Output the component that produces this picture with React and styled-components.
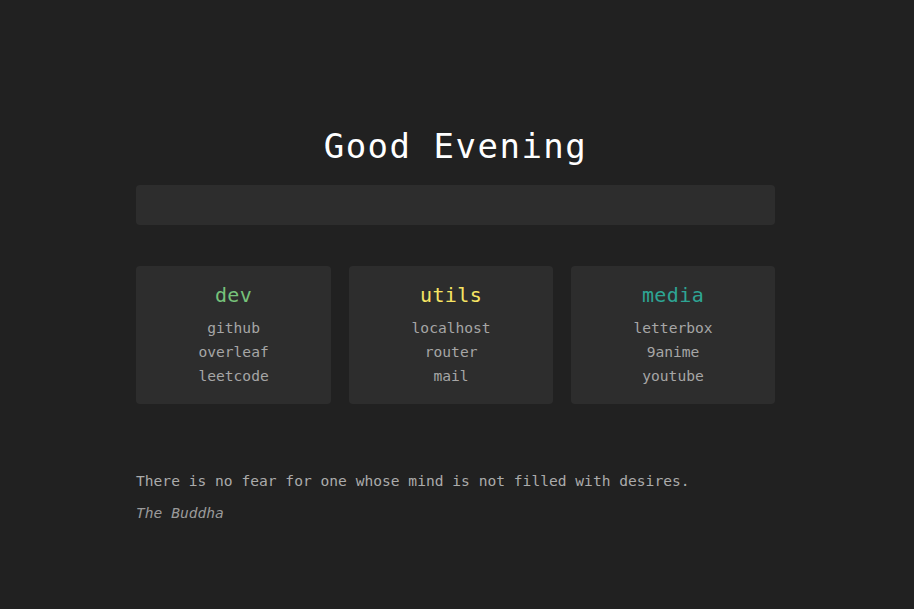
import styled, { createGlobalStyle } from "styled-components";

const GlobalStyle = createGlobalStyle`
  html, body {
    margin: 0;
    padding: 0;
    background: #212121;
  }
  body {
    font-family: "DejaVu Sans Mono", "Liberation Mono", monospace;
  }
`;

const groups = [
  { title: "dev", color: "#76c27a", links: ["github", "overleaf", "leetcode"] },
  { title: "utils", color: "#f6e463", links: ["localhost", "router", "mail"] },
  { title: "media", color: "#2ea594", links: ["letterbox", "9anime", "youtube"] },
];

const App = () => {
  return (
    <Page>
      <GlobalStyle />
      <Container>
        <Greeting>Good Evening</Greeting>
        <Search type="text" />
        <Cards>
          {groups.map((g) => (
            <Card key={g.title}>
              <CardTitle $color={g.color}>{g.title}</CardTitle>
              <Links>
                {g.links.map((l) => (
                  <LinkItem key={l} href="#">
                    {l}
                  </LinkItem>
                ))}
              </Links>
            </Card>
          ))}
        </Cards>
        <Quote>There is no fear for one whose mind is not filled with desires.</Quote>
        <Author>The Buddha</Author>
      </Container>
    </Page>
  );
};

export default App;

const Page = styled.div`
  min-height: 609px;
  background: #212121;
  padding: 124px 3px 0 0;
  box-sizing: border-box;
`;

const Container = styled.div`
  width: 639px;
  margin: 0 auto;
  display: flex;
  flex-direction: column;
`;

const Greeting = styled.h1`
  margin: 0;
  font-size: 34px;
  line-height: 44px;
  letter-spacing: 1.5px;
  font-weight: normal;
  color: #ffffff;
  text-align: center;
`;

const Search = styled.input`
  margin-top: 17px;
  height: 40px;
  border: none;
  outline: none;
  border-radius: 4px;
  background: #2d2d2d;
  color: #ddd;
  padding: 0 12px;
  font-family: inherit;
  font-size: 14.6px;
`;

const Cards = styled.div`
  display: flex;
  gap: 18px;
  margin-top: 41px;
`;

const Card = styled.div`
  flex: 1 1 auto;
  background: #2d2d2d;
  border-radius: 4px;
  padding: 16px 16px 16px;
  text-align: center;
`;

const CardTitle = styled.div`
  font-size: 20px;
  line-height: 26px;
  letter-spacing: 0.4px;
  color: ${(p) => p.$color};
  margin-bottom: 8px;
`;

const Links = styled.div`
  display: flex;
  flex-direction: column;
`;

const LinkItem = styled.a`
  font-size: 14.6px;
  line-height: 24px;
  color: #a6a6a6;
  text-decoration: none;
`;

const Quote = styled.p`
  margin: 65px 0 0;
  font-size: 14.6px;
  line-height: 24px;
  color: #ababab;
`;

const Author = styled.p`
  margin: 8px 0 0;
  font-size: 14.6px;
  line-height: 24px;
  font-style: italic;
  color: #9a9a9a;
`;
